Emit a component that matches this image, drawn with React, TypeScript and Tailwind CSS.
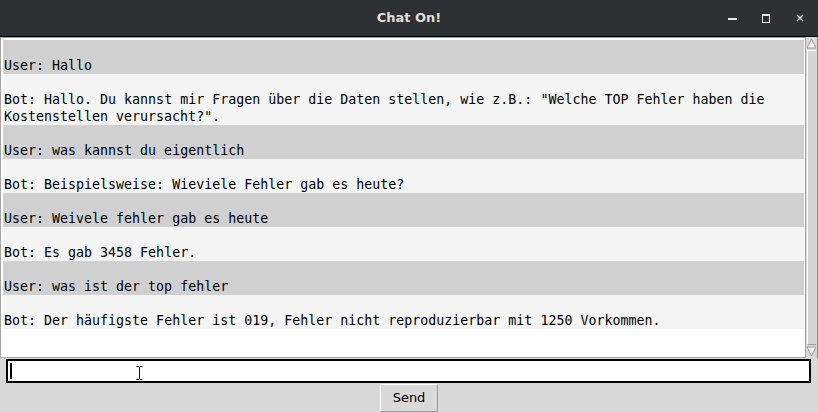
import React from "react";

interface Message {
  who: "User" | "Bot";
  text: string;
}

const messages: Message[] = [
  { who: "User", text: "Hallo" },
  {
    who: "Bot",
    text: 'Hallo. Du kannst mir Fragen über die Daten stellen, wie z.B.: "Welche TOP Fehler haben die Kostenstellen verursacht?".',
  },
  { who: "User", text: "was kannst du eigentlich" },
  { who: "Bot", text: "Beispielsweise: Wieviele Fehler gab es heute?" },
  { who: "User", text: "Weivele fehler gab es heute" },
  { who: "Bot", text: "Es gab 3458 Fehler." },
  { who: "User", text: "was ist der top fehler" },
  {
    who: "Bot",
    text: "Der häufigste Fehler ist 019, Fehler nicht reproduzierbar mit 1250 Vorkommen.",
  },
];

const App: React.FC = () => {
  return (
    <div className="w-[818px] h-[412px] flex flex-col bg-[#d9d9d9] overflow-hidden">
      {/* Fenster-Titelleiste */}
      <div className="h-[37px] shrink-0 relative flex items-center justify-center bg-[#2d3134] border-b border-black">
        <span className="text-[13px] font-bold text-[#e2ded6] font-['DejaVu_Sans',sans-serif]">
          Chat On!
        </span>
        <div className="absolute right-0 top-0 h-full flex items-center">
          <div className="w-[9px] h-[2px] bg-[#e8e8e8] mr-[25px] mt-[1px]" />
          <div className="w-[8px] h-[9px] border border-[#e8e8e8] border-t-2 mr-[26px]" />
          <svg width="8" height="8" viewBox="0 0 8 8" className="mr-[14px]">
            <path d="M1 1 L7 7 M7 1 L1 7" stroke="#e0e0e0" strokeWidth="1.3" />
          </svg>
        </div>
      </div>

      {/* Textbereich mit Scrollbar */}
      <div className="h-[321px] shrink-0 flex">
        <div className="flex-1 border border-[#a3a3a3] bg-white p-[2px] pr-[1px] overflow-hidden">
          <div className="font-['DejaVu_Sans_Mono',monospace] text-[13.3px] leading-[17px] text-black">
            {messages.map((m, i) => (
              <div
                key={i}
                className={`${m.who === "User" ? "bg-[#d0d0d0]" : "bg-[#f4f4f4]"} pl-[1px]`}
              >
                <div className="h-[17px]" />
                <div>
                  {m.who}: {m.text}
                </div>
              </div>
            ))}
          </div>
        </div>
        <div className="w-[12px] flex flex-col bg-[#d9d9d9] border-r border-[#8a8a8a]">
          <svg width="11" height="11" viewBox="0 0 11 11" className="mt-[1px]">
            <path d="M5.5 1 L10 10 L1 10 Z" fill="#f2f2f2" stroke="#9a9a9a" strokeWidth="1" />
          </svg>
          <div className="flex-1 mx-[1px] my-[1px] bg-[#d6d6d6] border-l border-white border-t border-b border-b-[#a0a0a0]" />
          <svg width="11" height="11" viewBox="0 0 11 11" className="mb-[1px]">
            <path d="M1 1 L10 1 L5.5 10 Z" fill="#f2f2f2" stroke="#9a9a9a" strokeWidth="1" />
          </svg>
        </div>
      </div>

      {/* Eingabe */}
      <div className="pl-[6px] pr-[7px] pt-[1px]">
        <div className="h-[24px] border-2 border-black bg-white relative">
          <div className="absolute left-[2px] top-[2px] w-[2px] h-[16px] bg-black" />
          <svg width="7" height="14" viewBox="0 0 7 14" className="absolute left-[128px] top-[5px]">
            <path d="M0.5 0.5 H2.5 L3.5 1.5 L4.5 0.5 H6.5 M3.5 1.5 V12.5 M0.5 13.5 H2.5 L3.5 12.5 L4.5 13.5 H6.5" stroke="#111" strokeWidth="1" fill="none" />
          </svg>
        </div>
      </div>

      <div className="flex justify-center pt-[1px]">
        <button className="w-[58px] h-[28px] bg-[#d9d9d9] border border-t-white border-l-white border-r-[#9a9a9a] border-b-[#9a9a9a] text-[13px] text-black font-['DejaVu_Sans',sans-serif]">
          Send
        </button>
      </div>
    </div>
  );
};

export default App;
